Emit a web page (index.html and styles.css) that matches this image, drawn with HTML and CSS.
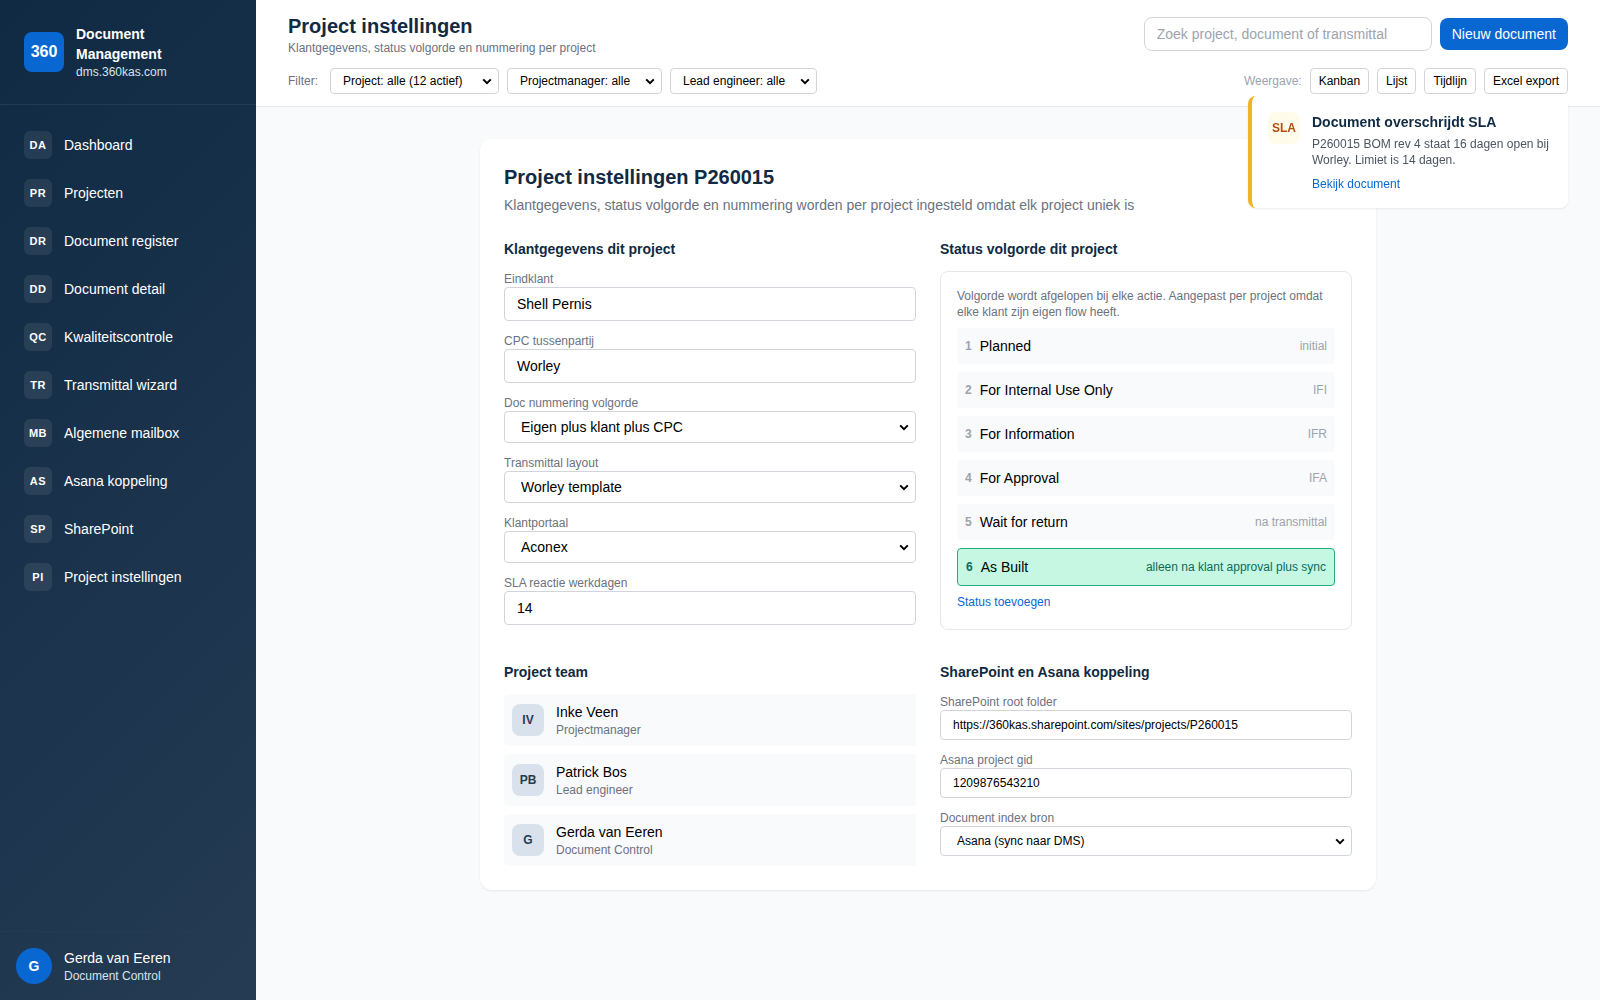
FILE: index.html
```html
<!DOCTYPE html>
<html lang="nl">
<head>
  <meta charset="UTF-8" />
  <meta name="viewport" content="width=device-width, initial-scale=1.0" />
  <title>Document Management</title>
  <link rel="stylesheet" href="styles.css">
</head>
<body>
  <aside class="sidebar">
    <div class="brand">
      <div class="brand-logo">360</div>
      <div>
        <div class="brand-name">Document Management</div>
        <div class="brand-url">dms.360kas.com</div>
      </div>
    </div>
    <nav class="nav">
      <a class="nav-item"><span class="nav-icon">DA</span>Dashboard</a>
      <a class="nav-item"><span class="nav-icon">PR</span>Projecten</a>
      <a class="nav-item"><span class="nav-icon">DR</span>Document register</a>
      <a class="nav-item"><span class="nav-icon">DD</span>Document detail</a>
      <a class="nav-item"><span class="nav-icon">QC</span>Kwaliteitscontrole</a>
      <a class="nav-item"><span class="nav-icon">TR</span>Transmittal wizard</a>
      <a class="nav-item"><span class="nav-icon">MB</span>Algemene mailbox</a>
      <a class="nav-item"><span class="nav-icon">AS</span>Asana koppeling</a>
      <a class="nav-item"><span class="nav-icon">SP</span>SharePoint</a>
      <a class="nav-item"><span class="nav-icon">PI</span>Project instellingen</a>
    </nav>
    <div class="user">
      <div class="user-avatar">G</div>
      <div>
        <div class="user-name">Gerda van Eeren</div>
        <div class="user-role">Document Control</div>
      </div>
    </div>
  </aside>

  <div class="page">
    <header class="topbar">
      <div class="topbar-row">
        <div>
          <h1 class="page-title">Project instellingen</h1>
          <p class="page-subtitle">Klantgegevens, status volgorde en nummering per project</p>
        </div>
        <div class="actions">
          <input class="search" type="text" placeholder="Zoek project, document of transmittal" />
          <button class="btn-primary">Nieuw document</button>
        </div>
      </div>
      <div class="topbar-row filter-row">
        <div class="filters">
          <span class="filter-label">Filter:</span>
          <select class="filter-select filter-project"><option>Project: alle (12 actief)</option></select>
          <select class="filter-select filter-manager"><option>Projectmanager: alle</option></select>
          <select class="filter-select filter-engineer"><option>Lead engineer: alle</option></select>
        </div>
        <div class="views">
          <span class="views-label">Weergave:</span>
          <button class="btn-view">Kanban</button>
          <button class="btn-view">Lijst</button>
          <button class="btn-view">Tijdlijn</button>
          <button class="btn-view">Excel export</button>
        </div>
      </div>
    </header>

    <main class="content">
      <div class="card">
        <h2 class="card-title">Project instellingen P260015</h2>
        <p class="card-subtitle">Klantgegevens, status volgorde en nummering worden per project ingesteld omdat elk project uniek is</p>

        <div class="grid">
          <section>
            <h3 class="section-title">Klantgegevens dit project</h3>
            <div class="fields">
              <label class="field">Eindklant<input class="control" type="text" value="Shell Pernis" /></label>
              <label class="field">CPC tussenpartij<input class="control" type="text" value="Worley" /></label>
              <label class="field">Doc nummering volgorde
                <select class="control control-select"><option>Eigen plus klant plus CPC</option></select>
              </label>
              <label class="field">Transmittal layout
                <select class="control control-select"><option>Worley template</option></select>
              </label>
              <label class="field">Klantportaal
                <select class="control control-select"><option>Aconex</option></select>
              </label>
              <label class="field">SLA reactie werkdagen<input class="control" type="text" value="14" /></label>
            </div>
          </section>

          <section>
            <h3 class="section-title">Status volgorde dit project</h3>
            <div class="status-panel">
              <p class="status-help">Volgorde wordt afgelopen bij elke actie. Aangepast per project omdat elke klant zijn eigen flow heeft.</p>
              <div class="status-list">
                <div class="status"><span class="status-nr">1</span>Planned<span class="status-code">initial</span></div>
                <div class="status"><span class="status-nr">2</span>For Internal Use Only<span class="status-code">IFI</span></div>
                <div class="status"><span class="status-nr">3</span>For Information<span class="status-code">IFR</span></div>
                <div class="status"><span class="status-nr">4</span>For Approval<span class="status-code">IFA</span></div>
                <div class="status"><span class="status-nr">5</span>Wait for return<span class="status-code">na transmittal</span></div>
                <div class="status status-final"><span class="status-nr">6</span>As Built<span class="status-code">alleen na klant approval plus sync</span></div>
              </div>
              <a class="link">Status toevoegen</a>
            </div>
          </section>

          <section>
            <h3 class="section-title">Project team</h3>
            <div class="team">
              <div class="member">
                <div class="member-avatar">IV</div>
                <div>
                  <div class="member-name">Inke Veen</div>
                  <div class="member-role">Projectmanager</div>
                </div>
              </div>
              <div class="member">
                <div class="member-avatar">PB</div>
                <div>
                  <div class="member-name">Patrick Bos</div>
                  <div class="member-role">Lead engineer</div>
                </div>
              </div>
              <div class="member">
                <div class="member-avatar">G</div>
                <div>
                  <div class="member-name">Gerda van Eeren</div>
                  <div class="member-role">Document Control</div>
                </div>
              </div>
            </div>
          </section>

          <section>
            <h3 class="section-title">SharePoint en Asana koppeling</h3>
            <div class="fields">
              <label class="field">SharePoint root folder<input class="control control-small" type="text" value="https://360kas.sharepoint.com/sites/projects/P260015" /></label>
              <label class="field">Asana project gid<input class="control control-small" type="text" value="1209876543210" /></label>
              <label class="field">Document index bron
                <select class="control control-select control-small"><option>Asana (sync naar DMS)</option></select>
              </label>
            </div>
          </section>
        </div>
      </div>
    </main>
  </div>

  <div class="toast">
    <div class="toast-icon">SLA</div>
    <div>
      <div class="toast-title">Document overschrijdt SLA</div>
      <p class="toast-text">P260015 BOM rev 4 staat 16 dagen open bij Worley. Limiet is 14 dagen.</p>
      <a class="link">Bekijk document</a>
    </div>
  </div>
</body>
</html>
```

FILE: styles.css
```css
* {
  box-sizing: border-box;
}
body {
  margin: 0;
  height: 100vh;
  display: flex;
  overflow: hidden;
  background: #f9fafb;
  color: #000;
  font-family: "Liberation Sans", Arial, sans-serif;
  font-size: 14px;
  line-height: 20px;
}
h1, h2, h3, p {
  margin: 0;
}
input, select, button {
  font-family: inherit;
  color: #000;
  margin: 0;
}
select {
  appearance: none;
  background: white url("data:image/svg+xml,%3Csvg xmlns='http://www.w3.org/2000/svg' width='10' height='7' viewBox='0 0 10 7'%3E%3Cpath d='M1.2 1.4L5 5.2L8.8 1.4' fill='none' stroke='%23000' stroke-width='2'/%3E%3C/svg%3E") no-repeat right 6px center;
}
.link {
  display: block;
  color: #0967d2;
  font-size: 12px;
  line-height: 16px;
}

/* sidebar */
.sidebar {
  width: 256px;
  flex-shrink: 0;
  display: flex;
  flex-direction: column;
  background: linear-gradient(135deg, #102a43, #243b53);
  color: white;
}
.brand {
  display: flex;
  align-items: center;
  gap: 12px;
  padding: 24px;
  border-bottom: 1px solid #243b53;
}
.brand-logo {
  width: 40px;
  height: 40px;
  flex-shrink: 0;
  display: flex;
  align-items: center;
  justify-content: center;
  background: #0967d2;
  border-radius: 8px;
  font-size: 16px;
  font-weight: bold;
}
.brand-name {
  font-weight: bold;
}
.brand-url {
  color: #d9e2ec;
  font-size: 12px;
  line-height: 16px;
}
.nav {
  flex: 1;
  padding: 16px 0;
}
.nav-item {
  display: flex;
  align-items: center;
  gap: 12px;
  padding: 10px 24px;
}
.nav-icon {
  width: 28px;
  height: 28px;
  display: flex;
  align-items: center;
  justify-content: center;
  background: rgba(255, 255, 255, 0.08);
  border-radius: 6px;
  font-size: 11px;
  font-weight: bold;
  letter-spacing: 0.5px;
}
.user {
  display: flex;
  align-items: center;
  gap: 12px;
  padding: 16px;
  border-top: 1px solid #243b53;
}
.user-avatar {
  width: 36px;
  height: 36px;
  display: flex;
  align-items: center;
  justify-content: center;
  background: #0967d2;
  border-radius: 50%;
  font-weight: bold;
}
.user-role {
  color: #d9e2ec;
  font-size: 12px;
  line-height: 16px;
}

/* top bar */
.page {
  flex: 1;
}
.topbar {
  background: white;
  border-bottom: 1px solid #e5e7eb;
  padding: 12px 32px;
}
.topbar-row {
  display: flex;
  align-items: center;
  justify-content: space-between;
}
.page-title {
  color: #102a43;
  font-size: 20px;
  line-height: 28px;
}
.page-subtitle {
  color: #6b7280;
  font-size: 12px;
  line-height: 16px;
}
.actions {
  display: flex;
  align-items: center;
  gap: 8px;
}
.search {
  width: 288px;
  height: 34px;
  padding: 8px 12px;
  border: 1px solid #d1d5db;
  border-radius: 8px;
  font-size: 14px;
}
.search::placeholder {
  color: #9ca3af;
}
.btn-primary {
  height: 32px;
  padding: 8px 12px;
  background: #0967d2;
  color: white;
  border: none;
  border-radius: 8px;
  font-size: 14px;
  line-height: 16px;
}
.filter-row {
  margin-top: 12px;
}
.filters, .views {
  display: flex;
  align-items: center;
  gap: 8px;
  font-size: 12px;
  line-height: 16px;
}
.filter-label {
  color: #6b7280;
  margin-right: 4px;
}
.views-label {
  color: #9ca3af;
}
.filter-select {
  height: 26px;
  padding: 4px 12px;
  border: 1px solid #d1d5db;
  border-radius: 4px;
  font-size: 12px;
}
.filter-project {
  width: 169px;
}
.filter-manager {
  width: 155px;
}
.filter-engineer {
  width: 147px;
}
.btn-view {
  height: 26px;
  padding: 4px 8px;
  background: white;
  border: 1px solid #d1d5db;
  border-radius: 4px;
  font-size: 12px;
  line-height: 16px;
}

/* settings card */
.content {
  padding: 32px;
}
.card {
  max-width: 896px;
  margin: 0 auto;
  padding: 24px;
  background: white;
  border-radius: 12px;
  box-shadow: 0 1px 2px rgba(0,0,0,0.08);
}
.card-title {
  color: #102a43;
  font-size: 20px;
  line-height: 28px;
}
.card-subtitle {
  margin-top: 4px;
  color: #6b7280;
}
.grid {
  display: grid;
  grid-template-columns: 1fr 1fr;
  gap: 32px 24px;
  margin-top: 24px;
}
.section-title {
  margin-bottom: 12px;
  color: #102a43;
  font-size: 14px;
}
.fields {
  display: flex;
  flex-direction: column;
  gap: 12px;
}
.field {
  color: #6b7280;
  font-size: 12px;
  line-height: 16px;
}
.control {
  display: block;
  width: 100%;
  height: 34px;
  padding: 0 12px;
  border: 1px solid #d1d5db;
  border-radius: 4px;
  font-size: 14px;
}
.control-select {
  height: 32px;
  padding: 0 16px;
}
.control-small {
  height: 30px;
  font-size: 12px;
}
.status-panel {
  padding: 16px 16px 19px;
  border: 1px solid #e5e7eb;
  border-radius: 8px;
}
.status-help {
  color: #6b7280;
  font-size: 12px;
  line-height: 16px;
}
.status-list {
  display: flex;
  flex-direction: column;
  gap: 8px;
  margin: 8px 0;
}
.status {
  display: flex;
  align-items: center;
  gap: 8px;
  padding: 8px;
  background: #f9fafb;
  border-radius: 4px;
}
.status-nr {
  color: #9ca3af;
  font-size: 12px;
  font-weight: bold;
  line-height: 16px;
}
.status-code {
  margin-left: auto;
  color: #9ca3af;
  font-size: 12px;
  line-height: 16px;
}
.status-final {
  background: #c6f7e2;
  border: 1px solid #27ab83;
}
.status-final .status-nr,
.status-final .status-code {
  color: #0c6b58;
}
.team {
  display: flex;
  flex-direction: column;
  gap: 8px;
}
.member {
  display: flex;
  align-items: center;
  gap: 12px;
  padding: 8px;
  background: #f9fafb;
  border-radius: 4px;
}
.member-avatar {
  width: 32px;
  height: 32px;
  display: flex;
  align-items: center;
  justify-content: center;
  background: #d9e2ec;
  color: #243b53;
  border-radius: 8px;
  font-size: 12px;
  font-weight: bold;
}
.member-role {
  color: #6b7280;
  font-size: 12px;
  line-height: 16px;
}

/* SLA notification, floats over the page */
.toast {
  position: fixed;
  top: 96px;
  right: 32px;
  width: 320px;
  display: flex;
  align-items: flex-start;
  gap: 12px;
  padding: 16px;
  background: white;
  border-left: 4px solid #f0b429;
  border-radius: 8px;
  box-shadow: 0 1px 2px rgba(0,0,0,0.08);
}
.toast-icon {
  width: 32px;
  height: 32px;
  flex-shrink: 0;
  display: flex;
  align-items: center;
  justify-content: center;
  background: #fffbea;
  color: #b44d12;
  border-radius: 8px;
  font-size: 12px;
  font-weight: bold;
}
.toast-title {
  color: #102a43;
  font-weight: bold;
}
.toast-text {
  margin: 4px 0 8px;
  color: #4b5563;
  font-size: 12px;
  line-height: 16px;
}
```
